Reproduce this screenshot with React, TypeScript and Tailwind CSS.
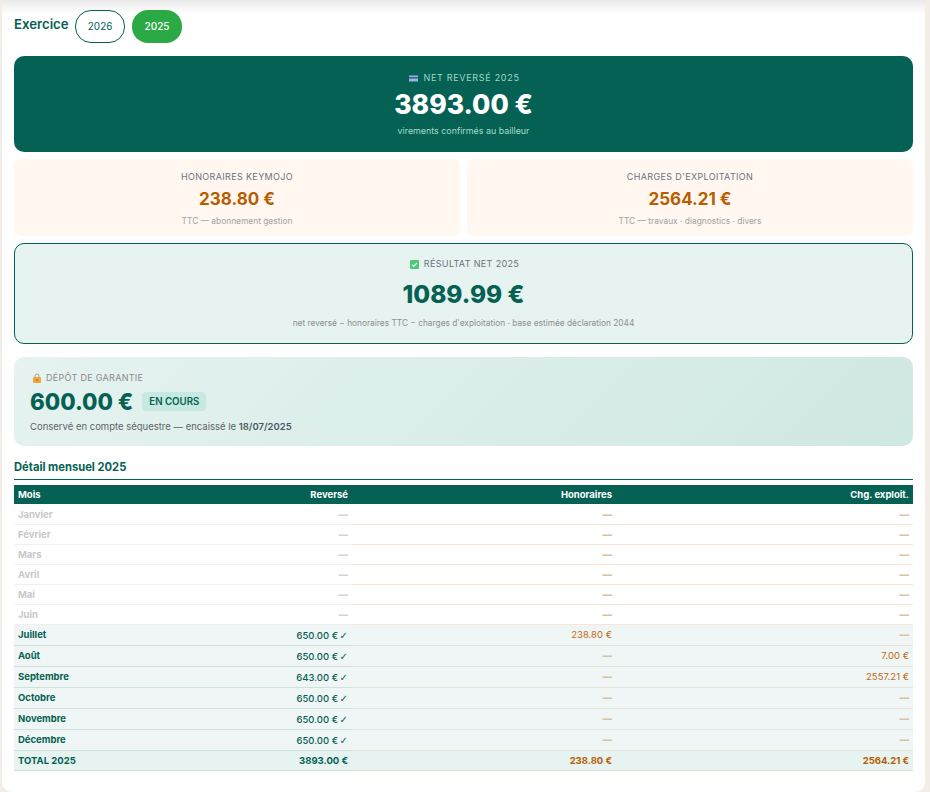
const months = [
  { name: 'Janvier', rev: null, hon: null, chg: null },
  { name: 'Février', rev: null, hon: null, chg: null },
  { name: 'Mars', rev: null, hon: null, chg: null },
  { name: 'Avril', rev: null, hon: null, chg: null },
  { name: 'Mai', rev: null, hon: null, chg: null },
  { name: 'Juin', rev: null, hon: null, chg: null },
  { name: 'Juillet', rev: '650.00 €', hon: '238.80 €', chg: null },
  { name: 'Août', rev: '650.00 €', hon: null, chg: '7.00 €' },
  { name: 'Septembre', rev: '643.00 €', hon: null, chg: '2557.21 €' },
  { name: 'Octobre', rev: '650.00 €', hon: null, chg: null },
  { name: 'Novembre', rev: '650.00 €', hon: null, chg: null },
  { name: 'Décembre', rev: '650.00 €', hon: null, chg: null },
];

function CardIcon() {
  return (
    <svg width="9" height="7" viewBox="0 0 9 7" className="inline-block">
      <rect width="9" height="6" y="0.5" fill="#8fb8e0" />
      <rect width="9" height="1.6" y="2" fill="#3f5f86" />
    </svg>
  );
}

function CheckIcon() {
  return (
    <svg width="9" height="9" viewBox="0 0 9 9" className="inline-block">
      <rect width="9" height="9" rx="1" fill="#4fc77f" />
      <path d="M2 4.6 3.8 6.4 7 2.8" fill="none" stroke="#e8fff0" strokeWidth="1.1" />
    </svg>
  );
}

function LockIcon() {
  return (
    <svg width="8" height="10" viewBox="0 0 8 10" className="inline-block">
      <path d="M2 4.5V3a2 2 0 0 1 4 0v1.5" fill="none" stroke="#a8a29a" strokeWidth="1" />
      <rect y="4" width="8" height="6" rx="0.8" fill="#f0a63c" />
      <rect x="3.4" y="6" width="1.2" height="2" fill="#a8651c" />
    </svg>
  );
}

function Dash({ className }: { className: string }) {
  return <span className={`font-black ${className}`}>—</span>;
}

export default function App() {
  return (
    <div className="h-[792px] overflow-hidden bg-[#f3ede8] pl-[2px] pr-[5px] text-[#1f2937] [font-family:Inter,sans-serif]">
      <div className="h-full rounded-b-[10px] bg-white bg-gradient-to-b from-[#e9e9e9] to-white to-[14px] pl-[12px] pr-[12px] pt-[10px]">
        <div className="flex items-center gap-[7px] h-[33px]">
          <span className="mb-[3px] mr-[-1px] text-[13.2px] font-semibold text-[#046153]">Exercice</span>
          <button className="h-[33px] w-[50px] rounded-[16px] border border-[#046153] bg-white pl-[1px] text-[10px] text-[#046153]">2026</button>
          <button className="h-[33px] w-[50px] rounded-[16px] bg-[#2aa945] pl-[1px] text-[10px] font-medium text-white">2025</button>
        </div>

        <div className="mt-[13px] flex h-[96px] flex-col items-center rounded-[10px] bg-[#046153] pt-[15px]">
          <div className="flex h-[14px] items-center gap-[5px] pl-[2px] text-[9px] leading-[14px] tracking-[0.7px] text-[#9fd6c4]">
            <CardIcon />
            <span>NET REVERSÉ 2025</span>
          </div>
          <div className="mt-[3px] text-[26.5px] leading-[32px] font-extrabold text-white">3893.00 €</div>
          <div className="mt-[4px] text-[8.9px] leading-[14px] text-[#a5dcc9]">virements confirmés au bailleur</div>
        </div>

        <div className="mt-[7px] grid grid-cols-2 gap-[7px]">
          <div className="flex h-[77px] flex-col items-center rounded-[8px] bg-[#fff7f0] pt-[11px]">
            <div className="text-[9px] leading-[14px] tracking-[0.35px] text-[#6b7280]">HONORAIRES KEYMOJO</div>
            <div className="mt-[4px] text-[17px] leading-[22px] font-bold text-[#b85c00]">238.80 €</div>
            <div className="mt-[4px] text-[8.4px] leading-[14px] text-[#a3a3a3]">TTC — abonnement gestion</div>
          </div>
          <div className="flex h-[77px] flex-col items-center rounded-[8px] bg-[#fff7f0] pt-[11px]">
            <div className="text-[9px] leading-[14px] tracking-[0.35px] text-[#6b7280]">CHARGES D'EXPLOITATION</div>
            <div className="mt-[4px] text-[17px] leading-[22px] font-bold text-[#b85c00]">2564.21 €</div>
            <div className="mt-[4px] text-[8.4px] leading-[14px] text-[#a3a3a3]">TTC — travaux · diagnostics · divers</div>
          </div>
        </div>

        <div className="mt-[7px] flex h-[101px] flex-col items-center rounded-[10px] border border-[#046153] bg-[#e6f3f0] pt-[13px]">
          <div className="flex h-[14px] items-center gap-[5px] pl-[2px] text-[9px] leading-[14px] tracking-[0.35px] text-[#6b7280]">
            <CheckIcon />
            <span>RÉSULTAT NET 2025</span>
          </div>
          <div className="mt-[7px] text-[24.4px] leading-[32px] font-extrabold text-[#046153]">1089.99 €</div>
          <div className="mt-[6px] text-[8.33px] leading-[14px] text-[#8f8f8f]">net reversé − honoraires TTC − charges d'exploitation · base estimée déclaration 2044</div>
        </div>

        <div className="mt-[13px] h-[89px] rounded-[10px] bg-[linear-gradient(135deg,#e6f3f0,#cfe8e1)] px-[16px] pt-[14px]">
          <div className="flex h-[14px] items-center gap-[5px] text-[9px] leading-[14px] tracking-[0.3px] text-[#8a8a8a]">
            <span className="ml-[3px] flex"><LockIcon /></span>
            <span>DÉPÔT DE GARANTIE</span>
          </div>
          <div className="mt-[2px] flex h-[30px] items-center gap-[9px]">
            <span className="text-[22.3px] leading-[30px] font-extrabold text-[#046153]">600.00 €</span>
            <span className="mb-[1px] rounded-[4px] bg-[#c6e9e0] px-[7px] text-[9.7px] leading-[19px] font-semibold text-[#046153]">EN COURS</span>
          </div>
          <div className="mt-[3px] text-[9.5px] leading-[14px] text-[#5f6368]">
            Conservé en compte séquestre — encaissé le <strong className="font-semibold text-[#4b5563]">18/07/2025</strong>
          </div>
        </div>

        <div className="mt-[13px] text-[11.2px] leading-[16px] font-bold text-[#046153]">Détail mensuel 2025</div>
        <div className="mt-[4px] mb-[5px] h-px bg-[#046153]" />

        <table className="w-full table-fixed border-collapse text-[9.5px] [&_th]:pt-[1px]">
          <colgroup>
            <col className="w-[110px]" />
            <col className="w-[228px]" />
            <col className="w-[264px]" />
            <col />
          </colgroup>
          <thead>
            <tr className="h-[19px] bg-[#046153] font-bold text-white">
              <th className="px-[4px] text-left font-bold">Mois</th>
              <th className="px-[4px] text-right font-bold">Reversé</th>
              <th className="px-[4px] text-right font-bold">Honoraires</th>
              <th className="px-[4px] text-right font-bold">Chg. exploit.</th>
            </tr>
          </thead>
          <tbody>
            {months.map((m) => {
              const active = m.rev !== null;
              return (
                <tr key={m.name} className={active ? 'h-[21px] bg-[#f0f6f5] [&_td]:pt-[1px]' : 'h-[20px] [&_td]:pt-[2px]'}>
                  <td className={active ? 'border-b border-[#cfe3de] px-[4px] font-bold text-[#046153]' : 'border-b border-[#f0f0f0] px-[4px] font-bold text-[#c8c8c8]'}>{m.name}</td>
                  <td className={active ? 'border-b border-[#cfe3de] px-[4px] text-right font-medium text-[#046153]' : 'border-b border-[#f0f0f0] px-[4px] text-right'}>
                    {active ? (
                      <span className="relative top-[1px]">
                        {m.rev} <span className="ml-[-1px] text-[10px] leading-[10px] [font-family:'DejaVu_Sans',sans-serif]">✓</span>
                      </span>
                    ) : (
                      <Dash className="text-[#d4d4d4]" />
                    )}
                  </td>
                  <td className={active ? 'border-b border-[#e6e3da] px-[4px] text-right text-[#bd6a12]' : 'border-b border-[#f8e6d8] px-[4px] text-right'}>
                    {m.hon ?? <Dash className="text-[#d6c3a8]" />}
                  </td>
                  <td className={active ? 'border-b border-[#e6e3da] px-[4px] text-right text-[#bd6a12]' : 'border-b border-[#f8e6d8] px-[4px] text-right'}>
                    {m.chg ?? <Dash className="text-[#d6c3a8]" />}
                  </td>
                </tr>
              );
            })}
            <tr className="h-[20px] bg-[#e6f3f0] font-bold [&_td]:pt-[2px]">
              <td className="border-b border-[#c5e2da] px-[4px] text-[#046153]">TOTAL 2025</td>
              <td className="border-b border-[#c5e2da] px-[4px] text-right text-[#046153]">3893.00 €</td>
              <td className="border-b border-[#e6dfcf] px-[4px] text-right text-[#b85c00]">238.80 €</td>
              <td className="border-b border-[#e6dfcf] px-[4px] text-right text-[#b85c00]">2564.21 €</td>
            </tr>
          </tbody>
        </table>
      </div>
    </div>
  );
}
